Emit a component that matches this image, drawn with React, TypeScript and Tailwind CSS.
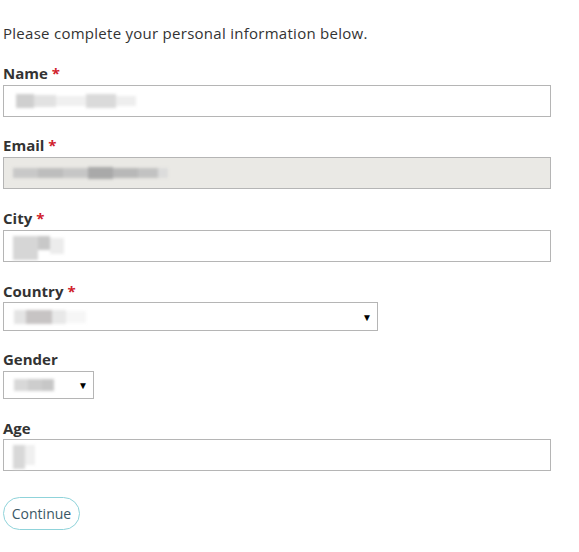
import React from 'react';

const font = { fontFamily: '"Open Sans", "Noto Sans", sans-serif' };

function Blur({ blocks }: { blocks: { w: number; h: number; c: string; dy?: number }[] }) {
  // blurred placeholder for redacted values
  return (
    <div className="flex items-center blur-[1.5px]">
      {blocks.map((b, i) => (
        <span
          key={i}
          className="block"
          style={{ width: b.w, height: b.h, background: b.c, marginTop: b.dy ?? 0 }}
        />
      ))}
    </div>
  );
}

function Label({ text, required }: { text: string; required?: boolean }) {
  return (
    <label className="block h-5 text-[15px] leading-5 font-bold text-[#333]">
      {text}
      {required && <span className="text-[#d0212b] ml-1">*</span>}
    </label>
  );
}

function Caret() {
  return <span className="text-[10px] text-black leading-none">▼</span>;
}

export default function App() {
  return (
    <div className="w-[579px] h-[552px] bg-white pl-[3px] pt-[23px]" style={font}>
      <p className="text-[15px] leading-5 text-[#333] tracking-[0.27px]">
        Please complete your personal information below.
      </p>

      <div className="mt-[20px]">
        <Label text="Name" required />
        <div className="mt-[2px] w-[548px] h-[32px] border border-[#b5b5b5] bg-white flex items-center pl-[12px]">
          <Blur
            blocks={[
              { w: 18, h: 14, c: '#cfcfcf' },
              { w: 22, h: 12, c: '#e2e2e2' },
              { w: 30, h: 10, c: '#f0f0f0' },
              { w: 30, h: 14, c: '#dadada' },
              { w: 20, h: 10, c: '#eeeeee' },
            ]}
          />
        </div>
      </div>

      <div className="mt-[18px]">
        <Label text="Email" required />
        <div className="mt-[2px] w-[548px] h-[32px] border border-[#b5b5b5] bg-[#eae9e5] flex items-center pl-[9px]">
          <Blur
            blocks={[
              { w: 25, h: 10, c: '#c8c8c8' },
              { w: 25, h: 10, c: '#bdbdbd' },
              { w: 25, h: 10, c: '#c6c6c6' },
              { w: 25, h: 12, c: '#a9a9a9' },
              { w: 25, h: 10, c: '#b8b8b8' },
              { w: 20, h: 10, c: '#c2c2c2' },
              { w: 10, h: 10, c: '#dcdcdc' },
            ]}
          />
        </div>
      </div>

      <div className="mt-[19px]">
        <Label text="City" required />
        <div className="mt-[2px] w-[548px] h-[32px] border border-[#b5b5b5] bg-white flex items-center pl-[9px]">
          <Blur
            blocks={[
              { w: 25, h: 24, c: '#d6d6d6', dy: 4 },
              { w: 12, h: 14, c: '#c8c8c8', dy: -6 },
              { w: 14, h: 16, c: '#ececec' },
            ]}
          />
        </div>
      </div>

      <div className="mt-[19px]">
        <Label text="Country" required />
        <div className="mt-[1px] w-[375px] h-[29px] border border-[#b5b5b5] bg-white flex items-center justify-between pl-[10px] pr-[5px]">
          <Blur
            blocks={[
              { w: 12, h: 14, c: '#e4e4e4' },
              { w: 26, h: 14, c: '#c7c4c4' },
              { w: 14, h: 14, c: '#e8e8e8' },
              { w: 20, h: 12, c: '#f6f6f6' },
            ]}
          />
          <Caret />
        </div>
      </div>

      <div className="mt-[18px]">
        <Label text="Gender" />
        <div className="mt-[2px] w-[91px] h-[28px] border border-[#b5b5b5] bg-white flex items-center justify-between pl-[10px] pr-[5px]">
          <Blur
            blocks={[
              { w: 14, h: 12, c: '#d8d8d8' },
              { w: 14, h: 12, c: '#cdcdcd' },
              { w: 12, h: 12, c: '#c7c7c7' },
            ]}
          />
          <Caret />
        </div>
      </div>

      <div className="mt-[19px]">
        <Label text="Age" />
        <div className="mt-[1px] w-[548px] h-[32px] border border-[#b5b5b5] bg-white flex items-center pl-[9px]">
          <Blur
            blocks={[
              { w: 12, h: 24, c: '#d8d8d8', dy: 4 },
              { w: 10, h: 20, c: '#f0f0f0' },
            ]}
          />
        </div>
      </div>

      <button className="mt-[26px] w-[77px] h-[33px] rounded-full border border-[#8fd3da] bg-white text-[14px] text-[#3a5866]">
        Continue
      </button>
    </div>
  );
}
